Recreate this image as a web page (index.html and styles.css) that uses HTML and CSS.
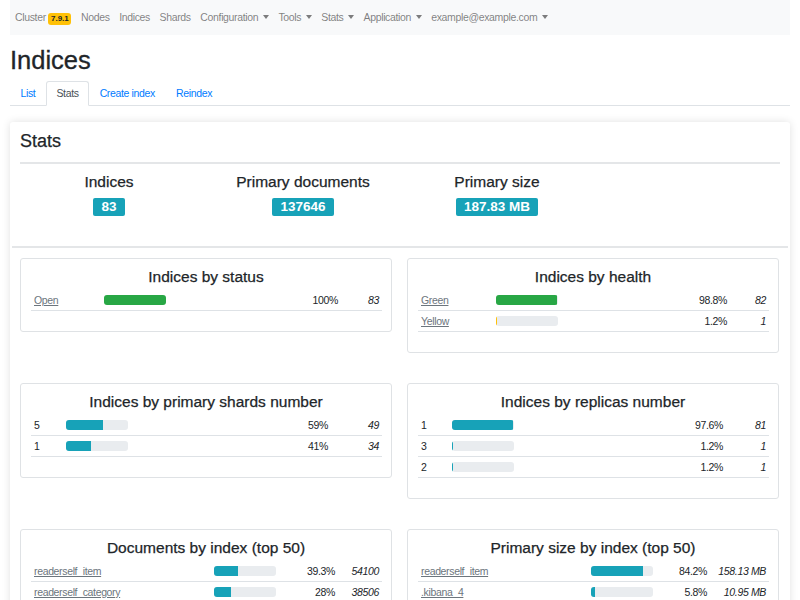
FILE: index.html
```html
<!DOCTYPE html>
<html>
<head>
<meta charset="utf-8">
<link rel="stylesheet" href="styles.css">
</head>
<body>
<div class="page">
  <nav class="navbar">
    <span class="nav-item">Cluster <span class="badge-ver">7.9.1</span></span>
    <span class="nav-item">Nodes</span>
    <span class="nav-item">Indices</span>
    <span class="nav-item">Shards</span>
    <span class="nav-item dd">Configuration</span>
    <span class="nav-item dd">Tools</span>
    <span class="nav-item dd">Stats</span>
    <span class="nav-item dd">Application</span>
    <span class="nav-item dd">example@example.com</span>
  </nav>

  <h1 class="title">Indices</h1>

  <ul class="tabs">
    <li class="tab">List</li>
    <li class="tab active">Stats</li>
    <li class="tab">Create index</li>
    <li class="tab">Reindex</li>
  </ul>

  <div class="card">
    <h4 class="card-title">Stats</h4>
    <div class="summary">
      <div class="sum-col"><div class="sum-label">Indices</div><span class="sum-badge">83</span></div>
      <div class="sum-col"><div class="sum-label">Primary documents</div><span class="sum-badge">137646</span></div>
      <div class="sum-col"><div class="sum-label">Primary size</div><span class="sum-badge">187.83 MB</span></div>
      <div class="sum-col"></div>
    </div>

    <div class="panels">
      <div class="panel">
        <h5 class="panel-title">Indices by status</h5>
        <table class="tbl t-status">
          <colgroup><col class="c1"><col class="c2"><col class="c3"><col class="c4"></colgroup>
          <tr><td><a class="lnk">Open</a></td><td><div class="bar"><div class="fill green" style="width:100%"></div></div></td><td class="pct">100%</td><td class="cnt">83</td></tr>
        </table>
      </div>
      <div class="panel">
        <h5 class="panel-title">Indices by health</h5>
        <table class="tbl t-health">
          <colgroup><col class="c1"><col class="c2"><col class="c3"><col class="c4"></colgroup>
          <tr><td><a class="lnk">Green</a></td><td><div class="bar"><div class="fill green" style="width:98.8%"></div></div></td><td class="pct">98.8%</td><td class="cnt">82</td></tr>
          <tr><td><a class="lnk">Yellow</a></td><td><div class="bar"><div class="fill yellow" style="width:1.2%"></div></div></td><td class="pct">1.2%</td><td class="cnt">1</td></tr>
        </table>
      </div>

      <div class="panel">
        <h5 class="panel-title">Indices by primary shards number</h5>
        <table class="tbl t-shards">
          <colgroup><col class="c1"><col class="c2"><col class="c3"><col class="c4"></colgroup>
          <tr><td>5</td><td><div class="bar"><div class="fill teal" style="width:59%"></div></div></td><td class="pct">59%</td><td class="cnt">49</td></tr>
          <tr><td>1</td><td><div class="bar"><div class="fill teal" style="width:41%"></div></div></td><td class="pct">41%</td><td class="cnt">34</td></tr>
        </table>
      </div>
      <div class="panel">
        <h5 class="panel-title">Indices by replicas number</h5>
        <table class="tbl t-replicas">
          <colgroup><col class="c1"><col class="c2"><col class="c3"><col class="c4"></colgroup>
          <tr><td>1</td><td><div class="bar"><div class="fill teal" style="width:97.6%"></div></div></td><td class="pct">97.6%</td><td class="cnt">81</td></tr>
          <tr><td>3</td><td><div class="bar"><div class="fill teal" style="width:1.2%"></div></div></td><td class="pct">1.2%</td><td class="cnt">1</td></tr>
          <tr><td>2</td><td><div class="bar"><div class="fill teal" style="width:1.2%"></div></div></td><td class="pct">1.2%</td><td class="cnt">1</td></tr>
        </table>
      </div>

      <div class="panel">
        <h5 class="panel-title">Documents by index (top 50)</h5>
        <table class="tbl t-docs">
          <colgroup><col class="c1"><col class="c2"><col class="c3"><col class="c4"></colgroup>
          <tr><td><a class="lnk">readerself_item</a></td><td><div class="bar"><div class="fill teal" style="width:39.3%"></div></div></td><td class="pct">39.3%</td><td class="cnt">54100</td></tr>
          <tr><td><a class="lnk">readerself_category</a></td><td><div class="bar"><div class="fill teal" style="width:28%"></div></div></td><td class="pct">28%</td><td class="cnt">38506</td></tr>
        </table>
      </div>
      <div class="panel">
        <h5 class="panel-title">Primary size by index (top 50)</h5>
        <table class="tbl t-size">
          <colgroup><col class="c1"><col class="c2"><col class="c3"><col class="c4"></colgroup>
          <tr><td><a class="lnk">readerself_item</a></td><td><div class="bar"><div class="fill teal" style="width:84.2%"></div></div></td><td class="pct">84.2%</td><td class="cnt">158.13 MB</td></tr>
          <tr><td><a class="lnk">.kibana_4</a></td><td><div class="bar"><div class="fill teal" style="width:5.8%"></div></div></td><td class="pct">5.8%</td><td class="cnt">10.95 MB</td></tr>
        </table>
      </div>
    </div>
  </div>
</div>
</body>
</html>
```

FILE: styles.css
```css
* { box-sizing: border-box; }
html, body { margin: 0; padding: 0; background: #fff; }
body {
  font-family: "Liberation Sans", Arial, sans-serif;
  font-size: 10.5px;
  letter-spacing: -0.35px;
  line-height: 1.5;
  color: #212529;
}
.page { padding: 0 10px; }

.navbar {
  display: flex;
  align-items: center;
  height: 35px;
  background: #f8f9fa;
  padding: 0;
  font-size: 10.5px;
}
.nav-item {
  color: rgba(0,0,0,.5);
  padding: 0 4.8px;
  white-space: nowrap;
}
.nav-item:first-child { padding-left: 5px; }
.nav-item.dd::after {
  content: "";
  display: inline-block;
  margin-left: 4.5px;
  vertical-align: 2px;
  border-top: 4px solid rgba(0,0,0,.5);
  border-left: 3px solid transparent;
  border-right: 3px solid transparent;
}
.badge-ver {
  display: inline-block;
  background: #ffc107;
  color: #212529;
  font-weight: 700;
  font-size: 8px;
  letter-spacing: 0;
  padding: 2px 2.6px;
  border-radius: 3px;
  line-height: 8px;
}

.title {
  font-size: 25.5px;
  font-weight: 400;
  letter-spacing: 0;
  -webkit-text-stroke: 0.3px #212529;
  margin: 10px 0 5.4px;
  line-height: 1.2;
}

.tabs {
  list-style: none;
  margin: 0;
  padding: 0;
  display: flex;
  border-bottom: 1px solid #dee2e6;
}
.tab {
  color: #007bff;
  padding: 4px 9.5px;
  border: 1px solid transparent;
  border-radius: 3px 3px 0 0;
  margin-bottom: -1px;
  line-height: 15px;
}
.tab.active {
  color: #495057;
  background: #fff;
  border-color: #dee2e6 #dee2e6 #fff;
}

.card {
  margin-top: 16px;
  padding: 9px 10px 10px;
  background: #fff;
  box-shadow: 0 0 8px rgba(0,0,0,.12);
  border-radius: 3px;
}
.card-title {
  font-size: 18px;
  font-weight: 400;
  letter-spacing: 0;
  -webkit-text-stroke: 0.25px #212529;
  margin: 0;
  padding-bottom: 9px;
  line-height: 1.2;
  border-bottom: 2px solid #e4e6e8;
}

.summary {
  display: grid;
  grid-template-columns: repeat(4, 194px);
  margin: 0 -8px;
  padding: 9px 0 30px;
  border-bottom: 2px solid #e4e6e8;
}
.sum-col { text-align: center; }
.sum-label {
  font-size: 15.5px;
  letter-spacing: 0;
  -webkit-text-stroke: 0.25px #212529;
  line-height: 1.2;
  margin-bottom: 6.8px;
}
.sum-badge {
  display: inline-block;
  background: #17a2b8;
  color: #fff;
  font-weight: 700;
  font-size: 13.5px;
  letter-spacing: 0;
  padding: 0 8px;
  border-radius: 2px;
  line-height: 18px;
}

.panels {
  display: grid;
  grid-template-columns: 372px 372px;
  column-gap: 15px;
  row-gap: 30px;
  align-items: start;
  margin-top: 10px;
}
.panel {
  border: 1px solid #dfe2e5;
  border-radius: 3px;
  padding: 9px 10px 20px;
}
.panel-title {
  text-align: center;
  font-size: 15.5px;
  font-weight: 400;
  letter-spacing: 0;
  -webkit-text-stroke: 0.25px #212529;
  margin: 0 0 3.4px;
  line-height: 1.2;
}
.tbl {
  width: 100%;
  table-layout: fixed;
  border-collapse: collapse;
}
.tbl td {
  padding: 2px 3px;
  border-bottom: 1px solid #dee2e6;
  line-height: 16px;
  vertical-align: middle;
  white-space: nowrap;
}
.lnk {
  color: #6c757d;
  text-decoration: underline;
}
.pct { text-align: right; }
.cnt { text-align: right; font-style: italic; }
.bar {
  width: 62px;
  height: 10px;
  background: #e9ecef;
  border-radius: 3px;
  overflow: hidden;
}
.fill { height: 100%; }
.green { background: #28a745; }
.yellow { background: #ffc107; }
.teal { background: #17a2b8; }

.t-status .c1 { width: 70px; }
.t-status .c2 { width: 168px; }
.t-status .c3 { width: 72px; }
.t-status .c4 { width: 41px; }

.t-health .c1 { width: 75px; }
.t-health .c2 { width: 160px; }
.t-health .c3 { width: 77px; }
.t-health .c4 { width: 39px; }

.t-shards .c1 { width: 32px; }
.t-shards .c2 { width: 180px; }
.t-shards .c3 { width: 88px; }
.t-shards .c4 { width: 51px; }

.t-replicas .c1 { width: 31px; }
.t-replicas .c2 { width: 190px; }
.t-replicas .c3 { width: 87px; }
.t-replicas .c4 { width: 43px; }

.t-docs .c1 { width: 180px; }
.t-docs .c2 { width: 70px; }
.t-docs .c3 { width: 57px; }
.t-docs .c4 { width: 44px; }

.t-size .c1 { width: 170px; }
.t-size .c2 { width: 70px; }
.t-size .c3 { width: 52px; }
.t-size .c4 { width: 59px; }
```
